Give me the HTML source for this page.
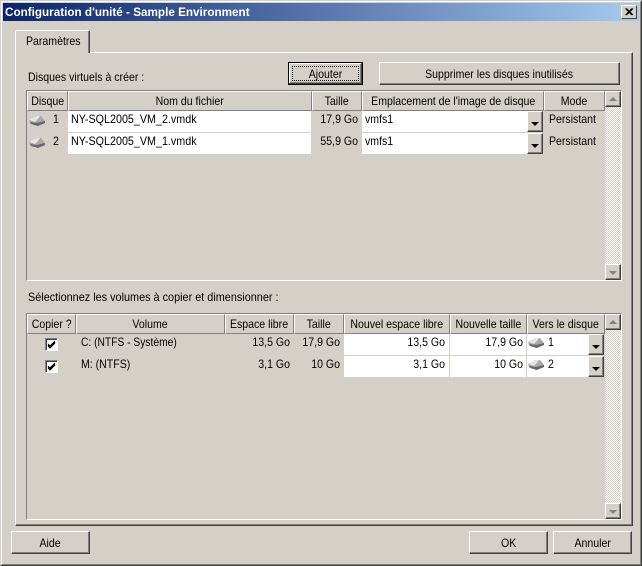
<!DOCTYPE html>
<html><head><meta charset="utf-8"><style>
html,body{margin:0;padding:0}
body{width:642px;height:566px;overflow:hidden;position:relative;background:#d4d0c8;font:12px/13px "Liberation Sans",sans-serif;color:#000}
div,span,svg{position:absolute;box-sizing:border-box}
i{font-style:normal;display:inline-block;transform:scaleX(.88);white-space:nowrap;margin:0 -20px}
.t{white-space:nowrap;height:13px;transform:scaleX(.88);transform-origin:0 0}
.c{text-align:center;transform-origin:50% 0}
.r{text-align:right;transform-origin:100% 0}
.btn{background:#d4d0c8;border:1px solid;border-color:#fff #404040 #404040 #fff;box-shadow:inset -1px -1px 0 #808080;text-align:center}
.h{background:#d4d0c8;border:1px solid;border-color:#fff #808080 #808080 #fff;text-align:center;line-height:18px;white-space:nowrap}
.w{background:#fff}
.dd{width:16px;height:21px;background:#d4d0c8;border:1px solid;border-color:#fff #404040 #404040 #fff;box-shadow:inset -1px -1px 0 #808080}
.dd:after{content:"";position:absolute;left:3px;top:10px;border:4px solid transparent;border-top:4px solid #000;border-bottom:0}
.sb{background:repeating-conic-gradient(#d4d0c8 0 25%,#fff 0 50%) 0 0/2px 2px}
.sbtn{width:16px;height:16px;background:#d4d0c8;border:1px solid;border-color:#fff #404040 #404040 #fff;box-shadow:inset -1px -1px 0 #808080}
.up:after{content:"";position:absolute;left:3px;top:5px;border:4px solid transparent;border-bottom:4px solid #808080;border-top:0}
.dn:after{content:"";position:absolute;left:3px;top:6px;border:4px solid transparent;border-top:4px solid #808080;border-bottom:0}
.cb{width:13px;height:13px;background:#fff;border:1px solid;border-color:#808080 #fff #fff #808080;box-shadow:inset 1px 1px 0 #404040}
</style></head><body>
<div style="left:0;top:0;width:642px;height:566px;border:1px solid;border-color:#d4d0c8 #404040 #404040 #d4d0c8"></div>
<div style="left:1px;top:1px;width:640px;height:564px;border:1px solid;border-color:#fff #808080 #808080 #fff"></div>
<div style="left:3px;top:3px;width:636px;height:18px;background:linear-gradient(90deg,#0a246a,#a6caf0)"></div>
<div class="t" style="left:5px;top:6px;color:#fff;font-weight:bold;transform:scaleX(.975)">Configuration d'unité - Sample Environment</div>
<div style="left:621px;top:5px;width:16px;height:14px;background:#d4d0c8;border:1px solid;border-color:#fff #404040 #404040 #fff"></div>
<svg style="left:621px;top:5px" width="16" height="14"><path d="M4.5 3.5L11 10M5.5 3.5L12 10M11 3.5L4.5 10M12 3.5L5.5 10" stroke="#000" fill="none"/></svg>

<div style="left:15px;top:52px;width:618px;height:474px;border:1px solid;border-color:#fff #404040 #404040 #fff;box-shadow:inset -1px -1px 0 #808080"></div>
<div style="left:15px;top:30px;width:75px;height:23px;background:#d4d0c8;border:1px solid;border-color:#fff #404040 #d4d0c8 #fff;border-bottom:0;border-radius:2px 2px 0 0;box-shadow:inset -1px 0 0 #808080"></div>
<div class="t" style="left:26px;top:35px">Paramètres</div>

<div class="t" style="left:28px;top:71px">Disques virtuels à créer :</div>
<div style="left:288px;top:62px;width:75px;height:23px;background:#d4d0c8;border:1px solid #000;box-shadow:inset -1px -1px 0 #404040,inset 1px 1px 0 #fff,inset -2px -2px 0 #808080"></div>
<div style="left:292px;top:66px;width:67px;height:15px;border:1px dotted #000"></div>
<div class="t c" style="left:288px;top:68px;width:75px">Ajouter</div>
<div class="btn" style="left:379px;top:62px;width:241px;height:23px;line-height:22px"><i>Supprimer les disques inutilisés</i></div>

<!-- table 1 -->
<div style="left:26px;top:90px;width:596px;height:191px;border:1px solid;border-color:#808080 #fff #fff #808080"></div>
<div class="h" style="left:27px;top:91px;width:41px;height:20px"><i>Disque</i></div>
<div class="h" style="left:68px;top:91px;width:244px;height:20px"><i>Nom du fichier</i></div>
<div class="h" style="left:312px;top:91px;width:50px;height:20px"><i>Taille</i></div>
<div class="h" style="left:362px;top:91px;width:182px;height:20px"><i>Emplacement de l'image de disque</i></div>
<div class="h" style="left:544px;top:91px;width:61px;height:20px"><i>Mode</i></div>

<div class="w" style="left:68px;top:111px;width:243px;height:21px"></div>
<div class="w" style="left:68px;top:133px;width:243px;height:21px"></div>
<div class="w" style="left:362px;top:111px;width:165px;height:21px"></div>
<div class="w" style="left:362px;top:133px;width:165px;height:21px"></div>
<div class="dd" style="left:527px;top:111px"></div>
<div class="dd" style="left:527px;top:133px"></div>

<svg style="left:28px;top:114px" width="18" height="13"><path d="M1 6L8 2H13L17 7V9L9 12L2 9Z" fill="#a8a8a8"/><path d="M2 8L9 9L17 7V9L10 12L3 10Z" fill="#686868"/><path d="M1 6L8 2H12L10 5L7 8Z" fill="#e4e4e4"/></svg>
<svg style="left:28px;top:136px" width="18" height="13"><path d="M1 6L8 2H13L17 7V9L9 12L2 9Z" fill="#a8a8a8"/><path d="M2 8L9 9L17 7V9L10 12L3 10Z" fill="#686868"/><path d="M1 6L8 2H12L10 5L7 8Z" fill="#e4e4e4"/></svg>
<div class="t" style="left:53px;top:113px">1</div>
<div class="t" style="left:53px;top:135px">2</div>
<div class="t" style="left:71px;top:113px;transform:scaleX(.895)">NY-SQL2005_VM_2.vmdk</div>
<div class="t" style="left:71px;top:135px;transform:scaleX(.895)">NY-SQL2005_VM_1.vmdk</div>
<div class="t r" style="left:312px;top:113px;width:46px">17,9 Go</div>
<div class="t r" style="left:312px;top:135px;width:46px">55,9 Go</div>
<div class="t" style="left:365px;top:113px">vmfs1</div>
<div class="t" style="left:365px;top:135px">vmfs1</div>
<div class="t" style="left:549px;top:113px">Persistant</div>
<div class="t" style="left:549px;top:135px">Persistant</div>

<div class="sb" style="left:605px;top:91px;width:16px;height:189px"></div>
<div class="sbtn up" style="left:605px;top:91px"></div>
<div class="sbtn dn" style="left:605px;top:264px"></div>

<div class="t" style="left:28px;top:291px;transform:scaleX(.905)">Sélectionnez les volumes à copier et dimensionner :</div>

<!-- table 2 -->
<div style="left:26px;top:313px;width:596px;height:207px;border:1px solid;border-color:#808080 #fff #fff #808080"></div>
<div class="h" style="left:27px;top:314px;width:49px;height:20px"><i>Copier ?</i></div>
<div class="h" style="left:76px;top:314px;width:149px;height:20px"><i>Volume</i></div>
<div class="h" style="left:225px;top:314px;width:69px;height:20px"><i>Espace libre</i></div>
<div class="h" style="left:294px;top:314px;width:50px;height:20px"><i>Taille</i></div>
<div class="h" style="left:344px;top:314px;width:106px;height:20px"><i>Nouvel espace libre</i></div>
<div class="h" style="left:450px;top:314px;width:77px;height:20px"><i>Nouvelle taille</i></div>
<div class="h" style="left:527px;top:314px;width:78px;height:20px"><i>Vers le disque</i></div>

<div class="w" style="left:344px;top:334px;width:105px;height:21px"></div>
<div class="w" style="left:450px;top:334px;width:76px;height:21px"></div>
<div class="w" style="left:527px;top:334px;width:61px;height:21px"></div>
<div class="w" style="left:344px;top:356px;width:105px;height:21px"></div>
<div class="w" style="left:450px;top:356px;width:76px;height:21px"></div>
<div class="w" style="left:527px;top:356px;width:61px;height:21px"></div>
<div class="dd" style="left:588px;top:334px"></div>
<div class="dd" style="left:588px;top:356px"></div>

<div class="cb" style="left:45px;top:338px"></div>
<div class="cb" style="left:45px;top:360px"></div>
<svg style="left:45px;top:338px" width="13" height="13"><path d="M3 6L5 8L10 3M3 7L5 9L10 4M3 8L5 10L10 5" stroke="#000" fill="none"/></svg>
<svg style="left:45px;top:360px" width="13" height="13"><path d="M3 6L5 8L10 3M3 7L5 9L10 4M3 8L5 10L10 5" stroke="#000" fill="none"/></svg>
<div class="t" style="left:81px;top:336px;transform:scaleX(.855)">C: (NTFS - Système)</div>
<div class="t" style="left:81px;top:358px">M: (NTFS)</div>
<div class="t r" style="left:225px;top:336px;width:65px">13,5 Go</div>
<div class="t r" style="left:225px;top:358px;width:65px">3,1 Go</div>
<div class="t r" style="left:294px;top:336px;width:46px">17,9 Go</div>
<div class="t r" style="left:294px;top:358px;width:46px">10 Go</div>
<div class="t r" style="left:344px;top:336px;width:101px">13,5 Go</div>
<div class="t r" style="left:344px;top:358px;width:101px">3,1 Go</div>
<div class="t r" style="left:450px;top:336px;width:73px">17,9 Go</div>
<div class="t r" style="left:450px;top:358px;width:73px">10 Go</div>
<svg style="left:527px;top:336px" width="18" height="13"><path d="M1 6L8 2H13L17 7V9L9 12L2 9Z" fill="#a8a8a8"/><path d="M2 8L9 9L17 7V9L10 12L3 10Z" fill="#686868"/><path d="M1 6L8 2H12L10 5L7 8Z" fill="#e4e4e4"/></svg>
<svg style="left:527px;top:358px" width="18" height="13"><path d="M1 6L8 2H13L17 7V9L9 12L2 9Z" fill="#a8a8a8"/><path d="M2 8L9 9L17 7V9L10 12L3 10Z" fill="#686868"/><path d="M1 6L8 2H12L10 5L7 8Z" fill="#e4e4e4"/></svg>
<div class="t" style="left:548px;top:336px">1</div>
<div class="t" style="left:548px;top:358px">2</div>

<div class="sb" style="left:605px;top:314px;width:16px;height:205px"></div>
<div class="sbtn up" style="left:605px;top:314px"></div>
<div class="sbtn dn" style="left:605px;top:503px"></div>

<div class="btn" style="left:11px;top:531px;width:79px;height:23px;line-height:22px"><i>Aide</i></div>
<div class="btn" style="left:469px;top:531px;width:79px;height:23px;line-height:22px"><i>OK</i></div>
<div class="btn" style="left:553px;top:531px;width:79px;height:23px;line-height:22px"><i>Annuler</i></div>
</body></html>
